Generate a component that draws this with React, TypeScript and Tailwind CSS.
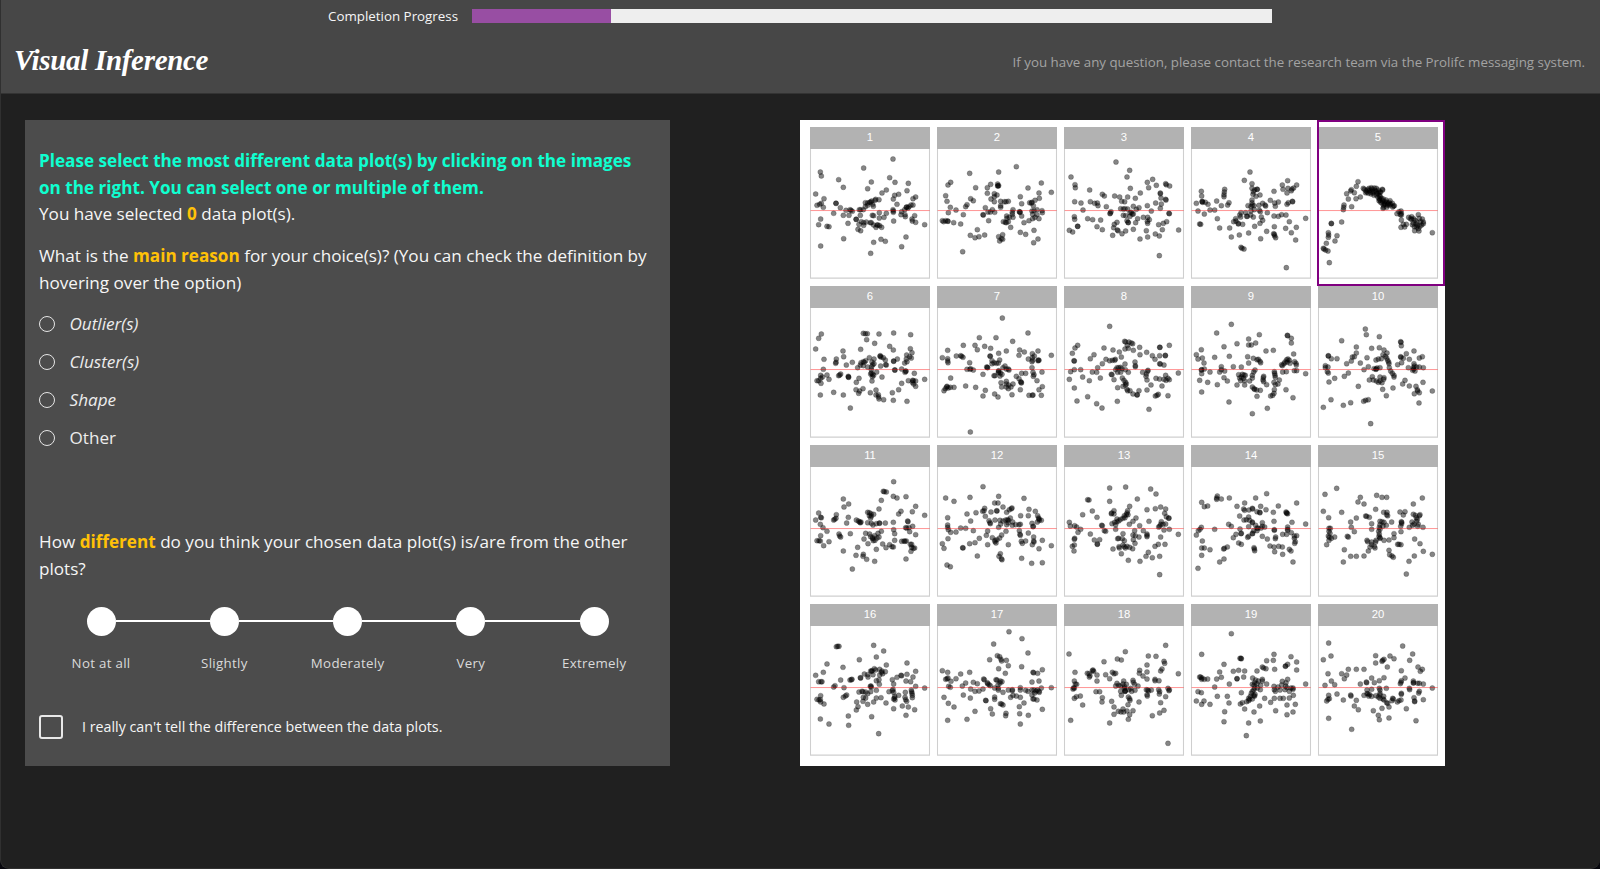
import React from "react";

type Panel = { id: number; x: number; y: number; pts: string };

// Each panel: origin of its frame and its residuals as "x,y" pairs, three units to a pixel.
const PANELS: Panel[] = [
  { id: 1, x: 31, y: 36, pts: "280,132 192,159 62,171 65,183 117,194 131,217 215,201 204,221 270,188 286,202 326,205 322,227 48,237 73,251 65,265 52,271 60,268 71,277 109,265 109,265 122,278 102,295 139,286 151,284 158,289 154,286 131,301 148,301 145,325 132,371 63,312 57,329 82,334 88,335 63,393 260,225 247,234 297,238 285,241 281,252 348,246 340,251 292,268 228,253 238,254 226,256 216,258 210,262 204,264 197,263 204,271 219,268 221,274 197,275 213,261 179,284 191,284 183,284 182,301 169,313 170,313 185,320 178,328 192,331 200,321 212,323 215,323 222,330 192,323 175,343 183,347 218,301 222,302 239,293 239,309 253,307 260,295 235,330 240,332 229,337 246,337 232,330 280,284 281,288 281,292 282,318 306,290 315,284 320,277 325,279 334,270 340,270 328,275 321,276 304,299 316,299 317,305 345,302 337,312 338,318 348,322 375,329 222,382 244,373 257,379 319,366 306,395 213,415" },
  { id: 2, x: 412, y: 36, pts: "650,155 510,175 597,171 453,202 445,210 725,204 755,232 528,218 573,208 594,207 595,212 597,212 594,213 563,218 685,219 718,234 438,242 442,259 452,277 446,293 469,285 513,251 521,257 502,269 498,275 491,299 563,235 584,236 592,240 584,245 574,252 584,260 603,259 603,272 603,277 614,260 626,259 619,260 662,245 666,266 719,250 706,256 697,262 690,263 695,264 701,272 557,278 578,284 565,291 572,291 585,292 550,299 551,300 640,284 638,292 638,298 659,290 661,291 661,292 666,303 629,307 621,303 622,310 640,307 567,317 611,320 617,322 620,323 626,320 633,337 428,317 432,320 438,317 444,318 445,319 462,323 483,327 697,288 703,287 712,284 727,287 728,293 699,298 712,299 706,307 718,311 699,311 688,317 673,323 533,344 512,361 526,368 538,365 555,360 609,359 597,365 605,371 609,373 600,378 662,352 678,358 703,346 715,372 702,383 489,410" },
  { id: 3, x: 42, y: 36, pts: "198,141 239,166 231,186 63,186 75,209 76,218 119,225 308,193 292,202 296,218 319,211 347,206 349,209 359,213 241,220 271,234 331,234 331,236 333,249 347,253 348,255 157,238 163,243 194,243 209,246 233,246 215,259 224,260 256,250 74,260 93,264 121,260 134,265 142,264 144,272 99,285 169,275 183,290 181,294 180,296 292,272 317,264 334,267 331,280 304,288 212,281 220,282 225,281 233,282 250,274 267,278 259,283 244,292 240,293 247,297 220,301 227,302 240,304 250,297 73,305 74,313 113,311 128,314 152,315 141,335 157,344 83,334 83,334 58,346 68,351 263,311 280,307 293,307 298,314 292,319 293,325 257,323 234,322 231,317 235,323 201,322 193,328 191,338 202,345 204,347 227,348 216,356 188,361 250,343 289,347 293,366 316,357 328,363 337,344 326,329 340,325 350,320 357,295 358,296 386,345 270,372 328,422" },
  { id: 4, x: 423, y: 36, pts: "600,171 583,196 606,206 713,197 697,210 740,210 524,223 523,231 522,239 522,245 454,229 455,243 439,265 457,259 456,260 458,262 466,262 474,268 444,288 463,297 480,285 494,285 500,258 514,272 537,263 533,270 606,220 614,225 621,223 622,223 610,230 609,238 618,244 630,240 672,229 699,223 711,234 714,220 726,222 724,227 731,219 606,255 606,263 607,270 594,272 603,275 612,272 627,271 638,265 645,270 647,273 661,256 674,264 685,261 676,274 711,268 715,263 727,259 728,260 573,293 587,293 603,288 613,284 628,286 631,290 652,293 569,300 592,304 602,300 572,306 590,304 610,306 634,306 638,316 557,311 558,318 551,320 565,325 565,327 578,328 614,334 630,325 672,303 685,304 695,299 708,300 718,320 767,310 502,311 449,327 452,328 509,339 539,339 673,335 707,340 739,337 724,353 544,366 568,360 596,354 650,349 671,356 673,358 674,363 677,368 632,371 737,375 709,458 573,397 576,400 582,402" },
  { id: 5, x: 804, y: 36, pts: "924,200 919,214 904,224 902,228 913,233 890,236 895,252 918,251 931,246 882,270 881,277 905,275 880,284 875,321 844,325 844,326 835,353 836,360 835,367 861,362 855,378 829,385 820,400 822,402 827,405 834,408 838,443 940,220 943,223 948,227 951,231 947,233 955,235 957,220 959,226 962,232 964,218 966,222 968,229 963,237 972,241 975,226 979,220 978,229 981,235 979,240 986,234 988,241 992,232 997,223 998,225 991,245 984,247 988,251 990,255 994,250 987,257 992,262 998,257 996,265 1001,270 1003,264 1005,260 1008,255 1011,262 1005,268 1001,277 999,280 1010,277 1013,270 1018,263 1020,257 1022,268 1027,265 1031,273 1028,276 1018,271 1033,272 953,224 973,219 985,225 990,230 970,233 1015,266 1000,252 1041,296 1047,290 1053,288 1054,295 1054,300 1051,299 1054,315 1060,328 1053,337 1064,336 1069,328 1076,307 1081,311 1085,305 1085,313 1091,311 1095,316 1090,324 1087,329 1098,327 1101,321 1103,332 1093,335 1105,299 1108,310 1117,312 1112,320 1120,321 1120,326 1115,330 1110,334 1100,336 1105,341 1094,347 1107,348 1147,353" },
  { id: 6, x: 31, y: 17, pts: "65,161 57,174 191,159 197,160 203,160 201,178 225,189 238,161 282,158 333,163 48,206 130,212 132,229 183,207 270,198 281,209 73,237 110,236 109,246 108,249 158,246 140,254 71,267 63,285 63,294 57,301 52,301 64,309 82,284 88,297 123,281 120,284 117,286 146,288 146,290 147,291 178,294 170,306 190,325 169,328 180,332 177,339 62,344 102,336 131,344 242,226 241,228 209,232 223,236 217,245 198,241 191,244 184,247 194,246 182,254 174,262 191,256 204,260 219,253 223,250 244,230 251,232 257,239 258,253 260,254 243,257 216,259 215,268 215,278 213,281 219,282 222,285 218,289 231,275 217,302 247,290 282,242 282,243 293,236 285,269 286,269 306,266 318,272 319,273 316,276 320,236 332,205 337,217 321,224 330,229 335,233 322,244 315,248 344,279 326,301 341,301 348,302 338,306 342,311 348,318 306,309 297,328 278,337 212,337 229,329 229,344 236,343 237,350 238,356 252,358 281,360 322,363 375,297 152,383 339,300 68,290" },
  { id: 7, x: 412, y: 17, pts: "608,113 685,158 539,172 589,172 639,183 491,195 526,195 533,208 555,198 573,204 444,210 428,232 444,235 444,242 445,247 470,227 483,226 486,228 490,231 510,247 597,219 620,212 571,227 572,228 600,239 577,241 583,247 590,249 596,248 577,250 561,260 563,261 564,262 660,209 674,215 658,225 715,212 698,220 704,227 686,236 698,232 699,240 697,244 716,239 718,240 715,241 755,225 502,267 511,267 513,265 521,269 550,282 453,293 610,262 616,257 620,266 626,266 628,269 597,271 597,273 602,278 607,282 601,287 583,286 586,286 596,277 697,262 727,275 700,276 703,283 701,288 712,301 666,279 678,279 650,288 658,295 663,304 665,306 665,308 604,307 620,303 620,311 627,314 640,311 606,320 620,320 626,325 634,320 728,319 718,328 662,328 498,317 528,321 557,330 550,347 585,341 595,350 637,343 688,345 698,345 700,344 725,345 463,321 442,318 441,320 437,325 433,331 452,321 446,323 512,455" },
  { id: 8, x: -167, y: 17, pts: "-30,138 -126,195 -134,203 -142,219 -137,241 -136,242 -47,203 -20,209 -77,223 -88,235 -1,215 5,230 -41,237 -52,250 -30,241 -22,240 -13,237 -15,240 -66,262 -82,275 -69,276 -58,293 -91,301 -111,290 -117,268 -136,268 -147,274 -151,297 -136,323 -128,362 -96,349 -69,370 -53,383 -7,363 -25,282 -23,283 -17,298 -8,262 -3,262 3,261 -12,268 7,265 -6,276 3,276 -6,322 8,293 13,300 18,306 20,311 17,314 10,318 22,327 24,331 31,331 15,183 18,185 28,185 35,188 39,190 23,195 26,204 16,206 41,210 60,201 61,223 81,216 98,226 106,237 120,201 121,201 149,195 120,226 137,225 137,226 46,245 47,256 47,259 16,251 17,268 26,276 120,250 122,251 133,254 85,270 84,273 69,276 80,281 79,288 82,299 109,294 120,296 133,297 138,285 145,294 149,298 139,300 176,278 94,314 127,317 82,329 58,331 40,341 52,344 53,343 107,347 112,345 116,342 145,346 88,387" },
  { id: 9, x: 213, y: 17, pts: "334,132 290,158 418,163 386,176 351,190 386,194 394,194 407,188 312,199 244,208 460,210 438,212 502,165 503,166 514,174 514,188 521,221 229,223 234,236 247,233 252,248 284,231 328,228 383,229 386,248 400,234 411,238 415,237 420,243 422,247 340,259 304,259 364,260 245,268 253,266 245,280 244,269 270,275 239,300 263,306 299,275 304,268 314,272 312,292 322,302 292,313 245,335 405,269 401,275 356,283 367,282 372,284 376,285 359,293 364,290 370,294 397,285 397,293 362,301 374,301 389,302 351,314 374,314 431,288 430,292 429,299 431,304 440,313 397,320 402,325 404,327 410,329 421,330 463,274 464,279 465,285 466,291 478,299 462,306 474,311 466,313 463,328 462,339 458,345 452,347 411,348 498,328 519,352 488,275 499,274 523,271 530,271 487,256 485,253 495,245 500,238 504,236 508,240 510,249 501,246 492,250 524,244 528,249 529,254 557,280 327,365 442,384 397,400" },
  { id: 10, x: 594, y: 17, pts: "736,146 739,163 778,169 665,181 709,200 755,204 778,202 792,209 801,218 842,184 843,186 844,196 882,212 625,226 625,227 634,235 651,235 616,256 616,262 624,260 622,274 625,278 644,294 627,305 610,381 633,358 670,375 692,367 709,218 703,229 697,230 694,242 680,250 721,248 741,232 789,223 796,228 784,235 775,236 768,239 800,233 803,240 806,245 807,250 745,259 732,268 762,265 768,266 771,263 780,262 768,267 808,262 812,272 817,279 822,285 822,290 685,278 673,288 748,299 757,289 760,299 769,302 780,290 792,292 791,297 780,302 775,306 786,307 715,318 788,327 819,323 799,346 859,220 842,229 843,231 850,234 868,237 845,247 833,253 865,262 882,250 883,257 880,262 881,266 878,270 885,272 890,260 898,260 898,233 907,229 910,262 909,306 855,300 848,311 868,317 888,318 892,328 893,332 898,337 883,340 937,332 897,368 745,358 737,360 731,363 752,430" },
  { id: 11, x: 31, y: 13, pts: "282,123 251,152 254,153 260,154 281,167 292,172 319,168 245,179 238,205 131,175 147,190 133,199 57,217 63,230 65,231 48,238 62,251 70,261 82,272 63,285 52,300 58,300 62,301 88,303 72,315 110,222 109,233 105,236 102,238 146,230 141,247 118,280 120,286 123,289 152,279 131,331 158,385 204,215 209,216 214,219 222,221 209,225 215,226 213,232 170,238 176,241 180,244 182,246 184,244 204,246 215,248 220,253 230,249 239,247 240,248 257,247 281,245 304,212 297,220 338,213 348,197 324,241 325,243 375,224 339,257 318,261 321,262 328,261 330,273 282,267 285,279 285,299 245,272 235,278 198,278 210,280 213,288 219,291 219,294 226,299 225,285 232,292 238,289 193,295 205,309 221,300 174,320 249,310 259,321 270,312 277,318 281,319 306,302 313,301 316,302 320,301 336,311 332,311 336,320 341,323 345,322 334,332 348,282 230,326 191,341 190,347 201,356 169,344 225,362 319,355" },
  { id: 12, x: 412, y: 13, pts: "550,138 511,170 438,172 463,182 597,167 585,187 595,187 673,173 610,199 637,202 635,204 629,207 555,203 553,210 549,212 591,210 592,211 574,214 502,220 529,216 444,231 513,241 557,227 663,225 621,215 688,206 686,225 707,212 714,225 717,232 718,235 719,239 725,239 713,244 697,248 701,257 700,258 444,253 444,260 446,267 453,275 469,274 483,262 498,263 521,270 568,240 571,246 572,249 586,238 601,239 603,250 610,241 618,238 624,237 626,239 632,232 639,244 625,246 621,252 638,254 648,252 658,252 662,251 597,260 445,294 428,309 433,323 489,321 490,322 510,309 526,306 539,293 564,271 560,284 578,291 586,299 586,303 592,297 600,292 619,272 606,283 589,307 564,312 626,312 659,270 661,281 662,284 686,277 665,302 668,308 678,301 702,289 702,301 703,304 698,312 728,299 718,324 755,315 533,346 602,339 598,347 605,354 607,357 666,353 696,368 728,366 442,373 452,378" },
  { id: 13, x: -167, y: 13, pts: "-30,142 18,139 93,145 109,160 -96,177 -92,178 53,175 -30,182 -82,211 -111,222 -68,230 30,197 -17,210 -24,217 -17,220 -25,219 24,210 22,217 20,222 14,225 25,222 82,207 107,204 123,199 138,205 135,218 140,228 148,232 147,233 49,232 40,242 29,251 88,242 60,255 -151,245 -148,256 -135,255 -129,259 -117,266 -125,275 -54,254 -52,255 -46,270 -42,272 -88,280 -76,298 -60,297 -67,310 -67,311 -135,293 -136,296 -142,317 -136,313 -137,331 -23,249 -15,245 -8,243 -2,240 3,236 10,233 -8,235 -12,252 16,231 -12,266 10,279 -3,293 -6,294 8,294 14,300 -20,325 10,313 14,318 22,317 30,320 39,324 -2,318 -1,322 17,322 5,339 45,270 40,283 47,285 58,289 41,297 46,308 71,270 82,280 82,284 82,288 123,289 125,243 123,251 120,257 117,259 130,251 138,250 133,268 149,266 176,281 116,311 106,317 136,311 86,335 79,347 98,351 120,347 26,359 61,362 120,402" },
  { id: 14, x: 213, y: 13, pts: "440,159 407,172 328,172 292,166 290,172 290,176 304,175 245,185 253,198 263,196 374,187 351,197 530,187 475,196 422,197 397,203 398,205 371,205 374,209 387,208 438,207 411,213 419,215 420,216 460,215 498,214 500,218 503,219 500,216 359,226 386,229 379,237 372,238 389,239 397,244 397,246 326,251 334,257 462,242 516,245 557,250 244,260 240,266 235,270 229,283 247,301 284,266 427,246 407,254 411,262 414,263 423,262 427,257 434,259 386,258 360,265 364,278 363,279 348,281 340,291 401,270 397,278 398,279 386,287 383,290 411,270 427,287 442,295 463,267 463,269 503,259 503,266 503,269 500,281 488,281 514,276 523,286 530,285 523,293 526,303 524,308 467,289 466,294 356,307 364,311 322,319 313,323 311,325 402,321 403,325 404,330 450,316 462,319 476,317 487,319 464,333 508,326 513,331 488,341 519,364 245,322 253,322 270,327 245,344 312,355 299,364 234,383" },
  { id: 15, x: 594, y: 13, pts: "650,143 615,161 721,170 714,184 732,190 770,164 786,170 800,170 767,206 610,212 665,215 626,231 709,232 692,244 694,260 703,273 737,226 740,227 748,230 791,215 801,215 800,222 803,225 840,214 855,213 850,223 880,190 907,172 755,249 755,266 780,242 786,243 792,245 780,252 778,260 780,266 789,256 799,254 815,244 844,243 845,245 845,249 880,221 886,224 898,225 900,222 889,231 892,236 890,242 876,244 882,250 878,254 868,260 895,251 893,257 909,260 842,257 843,273 627,263 631,263 627,272 630,278 625,286 628,290 634,293 627,299 644,289 620,312 682,287 685,289 776,272 778,280 777,287 780,291 780,293 822,279 822,291 807,298 792,299 741,299 743,303 755,304 768,299 767,304 755,312 763,317 750,319 765,322 745,331 833,311 837,311 843,312 884,295 900,309 910,332 883,346 937,341 807,329 809,342 816,346 820,350 673,327 692,347 709,347 732,346 670,364 867,362 859,400" },
  { id: 16, x: 31, y: 10, pts: "110,138 114,137 118,137 222,134 252,151 230,169 179,177 82,190 130,200 322,187 260,193 71,215 48,224 57,243 64,243 67,243 123,238 151,238 157,236 155,237 106,255 102,259 133,261 63,285 52,296 58,298 62,297 63,304 73,310 62,355 88,370 131,290 137,286 141,283 146,346 147,374 224,204 217,210 213,211 216,212 228,208 240,206 247,211 245,215 249,219 257,213 240,223 194,220 204,222 205,229 182,231 183,232 220,222 238,237 230,240 239,251 214,256 212,257 215,260 230,269 178,274 187,272 190,273 198,274 213,273 204,279 191,290 198,292 230,292 244,291 190,302 222,304 204,311 171,304 175,318 170,328 259,307 278,237 292,230 304,224 306,225 322,221 340,229 348,212 319,241 333,243 282,250 348,257 268,273 278,270 280,266 282,275 285,287 285,292 282,295 286,298 297,284 317,275 316,290 318,297 321,302 336,273 337,278 338,284 335,268 338,291 308,316 326,319 345,327 282,324 375,262 319,344 216,348 237,399" },
  { id: 17, x: 412, y: 10, pts: "628,93 667,114 582,130 685,157 593,165 600,168 604,176 606,181 620,179 570,177 626,195 597,204 617,218 666,198 428,210 444,215 442,234 438,236 445,232 454,242 469,234 483,220 510,215 447,257 452,260 488,256 498,247 491,283 512,292 521,245 533,249 513,265 526,272 538,271 550,265 552,235 554,237 563,246 564,249 572,255 568,252 589,237 592,238 602,241 607,243 601,247 595,253 585,262 596,263 596,268 610,275 626,268 638,267 638,270 662,261 662,268 678,269 685,272 640,284 650,286 633,290 662,290 728,207 700,215 702,216 714,218 697,244 718,241 755,261 725,262 697,268 703,268 713,268 718,272 719,275 705,277 697,283 700,295 703,295 712,298 673,307 659,318 433,290 446,308 463,319 444,359 502,356 526,332 558,299 559,300 585,289 585,296 602,309 606,310 610,313 573,324 578,340 619,338 618,345 660,339 686,344 728,326 662,370 709,271" },
  { id: 18, x: -167, y: 10, pts: "138,134 17,153 -152,160 86,166 109,167 -7,175 5,178 -47,183 82,193 133,182 135,188 127,205 123,211 -134,215 -97,218 -92,219 -80,208 -82,210 -78,212 -89,225 -91,229 -68,223 -68,241 -136,241 -133,250 -129,251 -138,261 -136,263 -140,265 -42,222 -22,215 -17,219 -12,218 -30,234 60,209 59,218 70,226 82,214 82,235 106,236 106,240 118,240 176,219 40,239 41,245 45,251 12,241 20,251 -8,248 -3,254 10,250 -12,256 15,258 14,263 17,270 16,272 16,272 3,272 5,284 46,269 55,256 33,263 28,267 36,272 3,256 -71,273 -60,273 -52,291 -53,304 -24,302 -136,293 -130,288 -118,286 -111,313 -147,359 26,289 30,294 31,299 25,312 -17,319 -17,341 -30,367 58,304 80,267 84,268 87,271 95,268 82,282 83,286 117,267 120,273 119,280 138,288 145,263 149,267 148,270 123,306 10,325 22,331 12,334 4,334 30,342 40,330 -4,332 26,356 120,337 133,329 98,345 145,428" },
  { id: 19, x: 213, y: 10, pts: "334,99 245,161 462,161 513,168 360,173 363,173 364,174 312,191 530,184 440,180 460,179 503,191 497,196 496,197 427,199 438,204 431,202 464,206 530,208 299,214 340,212 356,209 374,211 411,211 239,229 242,229 246,232 245,236 253,236 263,235 290,235 304,230 284,259 351,234 351,234 371,229 328,250 398,232 407,238 415,241 427,236 427,241 404,246 397,251 402,254 411,249 440,250 422,254 404,262 412,262 421,267 401,268 397,272 394,278 405,281 401,285 404,286 391,287 386,293 389,296 386,300 380,303 397,295 364,276 367,306 361,310 374,325 462,257 463,267 466,272 474,259 487,242 503,236 498,246 485,253 497,256 501,261 513,262 519,262 519,266 508,272 495,267 480,268 557,250 520,284 508,292 490,293 480,293 463,293 434,293 452,305 501,313 526,311 419,316 467,330 519,334 501,342 402,334 421,361 386,367 379,405 234,273 244,276 229,301 252,301 245,311 270,311 292,287 322,287 327,307 314,333 312,363" },
  { id: 20, x: 594, y: 10, pts: "626,127 848,136 633,166 610,177 767,165 767,187 810,166 822,174 792,176 788,179 786,182 802,199 878,160 869,179 844,210 624,219 665,219 680,223 685,206 709,206 732,206 673,234 634,241 644,252 615,254 651,280 626,284 628,294 624,296 620,301 670,298 692,283 693,286 709,299 703,316 715,327 721,250 739,244 740,246 755,232 763,246 778,240 792,231 741,268 755,266 778,263 780,268 799,263 744,279 741,279 732,284 749,282 746,286 755,287 768,285 775,289 780,278 780,293 780,283 789,295 792,298 791,287 800,306 803,308 818,293 820,295 816,300 837,300 832,304 843,298 844,278 844,281 786,323 807,319 760,330 775,344 778,357 807,352 855,232 844,240 843,245 841,249 894,199 907,206 901,212 880,241 880,247 881,246 893,248 898,248 910,250 868,263 869,267 937,262 898,272 896,277 882,291 884,301 884,303 910,297 859,324 888,360 695,386 626,353" },
];

const parse = (s: string) =>
  s.split(" ").map((p) => {
    const [x, y] = p.split(",");
    return { x: Number(x), y: Number(y) };
  });

function Plot({ panel }: { panel: Panel }) {
  return (
    <div className="relative flex h-[151.7px] w-[120px] flex-col">
      <div className="flex h-[22px] shrink-0 items-center justify-center bg-[#b2b2b2] font-['Liberation_Sans',sans-serif] text-[11.3px] leading-none text-white">
        {panel.id}
      </div>
      <svg
        className="block h-[129.67px] w-[120.33px] overflow-visible"
        viewBox={`${panel.x} ${panel.y + 66} 361 389`}
      >
        <path
          d={`M${panel.x + 1.5} ${panel.y + 66}V${panel.y + 453.5}H${panel.x + 358.5}V${panel.y + 66}`}
          fill="none"
          stroke="#cfcfcf"
          strokeWidth={3.2}
        />
        <g fill="#000" fillOpacity={0.48} stroke="#000" strokeOpacity={0.33} strokeWidth={1.8}>
          {parse(panel.pts).map((p, i) => (
            <circle key={i} cx={p.x} cy={p.y} r={7.6} />
          ))}
        </g>
        <path d={`M${panel.x + 2} ${panel.y + 250.7}h357`} stroke="#ff0000" strokeOpacity={0.42} strokeWidth={3} />
      </svg>
      {panel.id === 5 && (
        <div className="absolute -left-[1.4px] -top-[7px] h-[166px] w-[128px] border-2 border-[#800080]" />
      )}
    </div>
  );
}

const REASONS = [
  { label: "Outlier(s)", italic: true },
  { label: "Cluster(s)", italic: true },
  { label: "Shape", italic: true },
  { label: "Other", italic: false },
];
const LEVELS = ["Not at all", "Slightly", "Moderately", "Very", "Extremely"];

export default function App() {
  return (
    <div className="h-[869px] w-[1600px] overflow-hidden bg-[#07070d]">
      <div className="flex h-full flex-col overflow-hidden rounded-b-[9px] border-b border-l border-[#303030] bg-[#202020] font-['Open_Sans',sans-serif] text-[#f6f6f6]">
        <header className="flex h-[94px] shrink-0 flex-col border-b border-[#333] bg-[#474747]">
          <div className="flex h-8 items-center pl-[327px]">
            <span className="w-[143.5px] whitespace-nowrap text-[13.35px]">Completion Progress</span>
            <div className="flex h-[14px] w-[800px] bg-[#eeeeee]">
              <div className="h-full w-[139px] bg-[#984ea3]" />
            </div>
          </div>
          <div className="flex h-[62px] items-center justify-between pl-[13px] pr-[15px]">
            <h1 className="-mt-1 whitespace-nowrap font-['Satisfy','Liberation_Serif',cursive] text-[29px] font-bold italic leading-none tracking-[-0.3px] text-white">
              Visual Inference
            </h1>
            <p className="whitespace-nowrap text-[13.34px] text-[#a3a3a3]">
              If you have any question, please contact the research team via the Prolifc messaging system.
            </p>
          </div>
        </header>

        <main className="flex items-start pl-6 pt-[26px]">
          <section className="flex h-[646px] w-[645px] flex-col bg-[#4c4c4c] pl-[14px] pt-[28px] text-[17.14px] leading-[26.7px]">
            <p className="whitespace-nowrap font-bold text-[#0fffd0]">
              Please select the most different data plot(s) by clicking on the images
              <br />
              on the right. You can select one or multiple of them.
            </p>
            <p>
              You have selected <b className="text-[#ffc107]">0</b> data plot(s).
            </p>
            <p className="mt-[15px] whitespace-nowrap">
              What is the <b className="text-[#ffc107]">main reason</b> for your choice(s)? (You can check the definition by
              <br />
              hovering over the option)
            </p>
            <div className="mt-[9px] flex flex-col">
              {REASONS.map((r) => (
                <label key={r.label} className="flex h-[38.1px] items-center">
                  <span className="-mt-0.5 size-4 rounded-full border border-[#e6e6e6]" />
                  <span className={r.italic ? "ml-[14.5px] italic text-[#ececec]" : "ml-[14.5px] text-[#ececec]"}>{r.label}</span>
                </label>
              ))}
            </div>
            <p className="mt-[71.5px] whitespace-nowrap">
              How <b className="text-[#ffc107]">different</b> do you think your chosen data plot(s) is/are from the other
              <br />
              plots?
            </p>
            <div className="mt-[24px] flex flex-col pl-[47.6px]">
              <div className="flex items-center">
                {LEVELS.map((l, i) => (
                  <React.Fragment key={l}>
                    {i > 0 && <span className="h-[2px] w-[94.3px] bg-white" />}
                    <span className="size-[29px] rounded-full bg-white" />
                  </React.Fragment>
                ))}
              </div>
              <div className="-ml-[47.2px] mt-[14px] flex">
                {LEVELS.map((l) => (
                  <span key={l} className="w-[123.3px] text-center text-[13.3px] tracking-[0.3px] text-[#dadada]">
                    {l}
                  </span>
                ))}
              </div>
            </div>
            <label className="mt-[37.5px] flex items-center">
              <span className="size-[24px] rounded-[3px] border-2 border-[#e8e8e8]" />
              <span className="ml-[19px] text-[14.28px]">I really can't tell the difference between the data plots.</span>
            </label>
          </section>

          <section className="ml-[130px] grid h-[646px] w-[645px] grid-cols-[repeat(5,127px)] grid-rows-[repeat(4,158.85px)] bg-white pl-[10px] pt-[7px]">
            {PANELS.map((p) => (
              <Plot key={p.id} panel={p} />
            ))}
          </section>
        </main>
      </div>
    </div>
  );
}
